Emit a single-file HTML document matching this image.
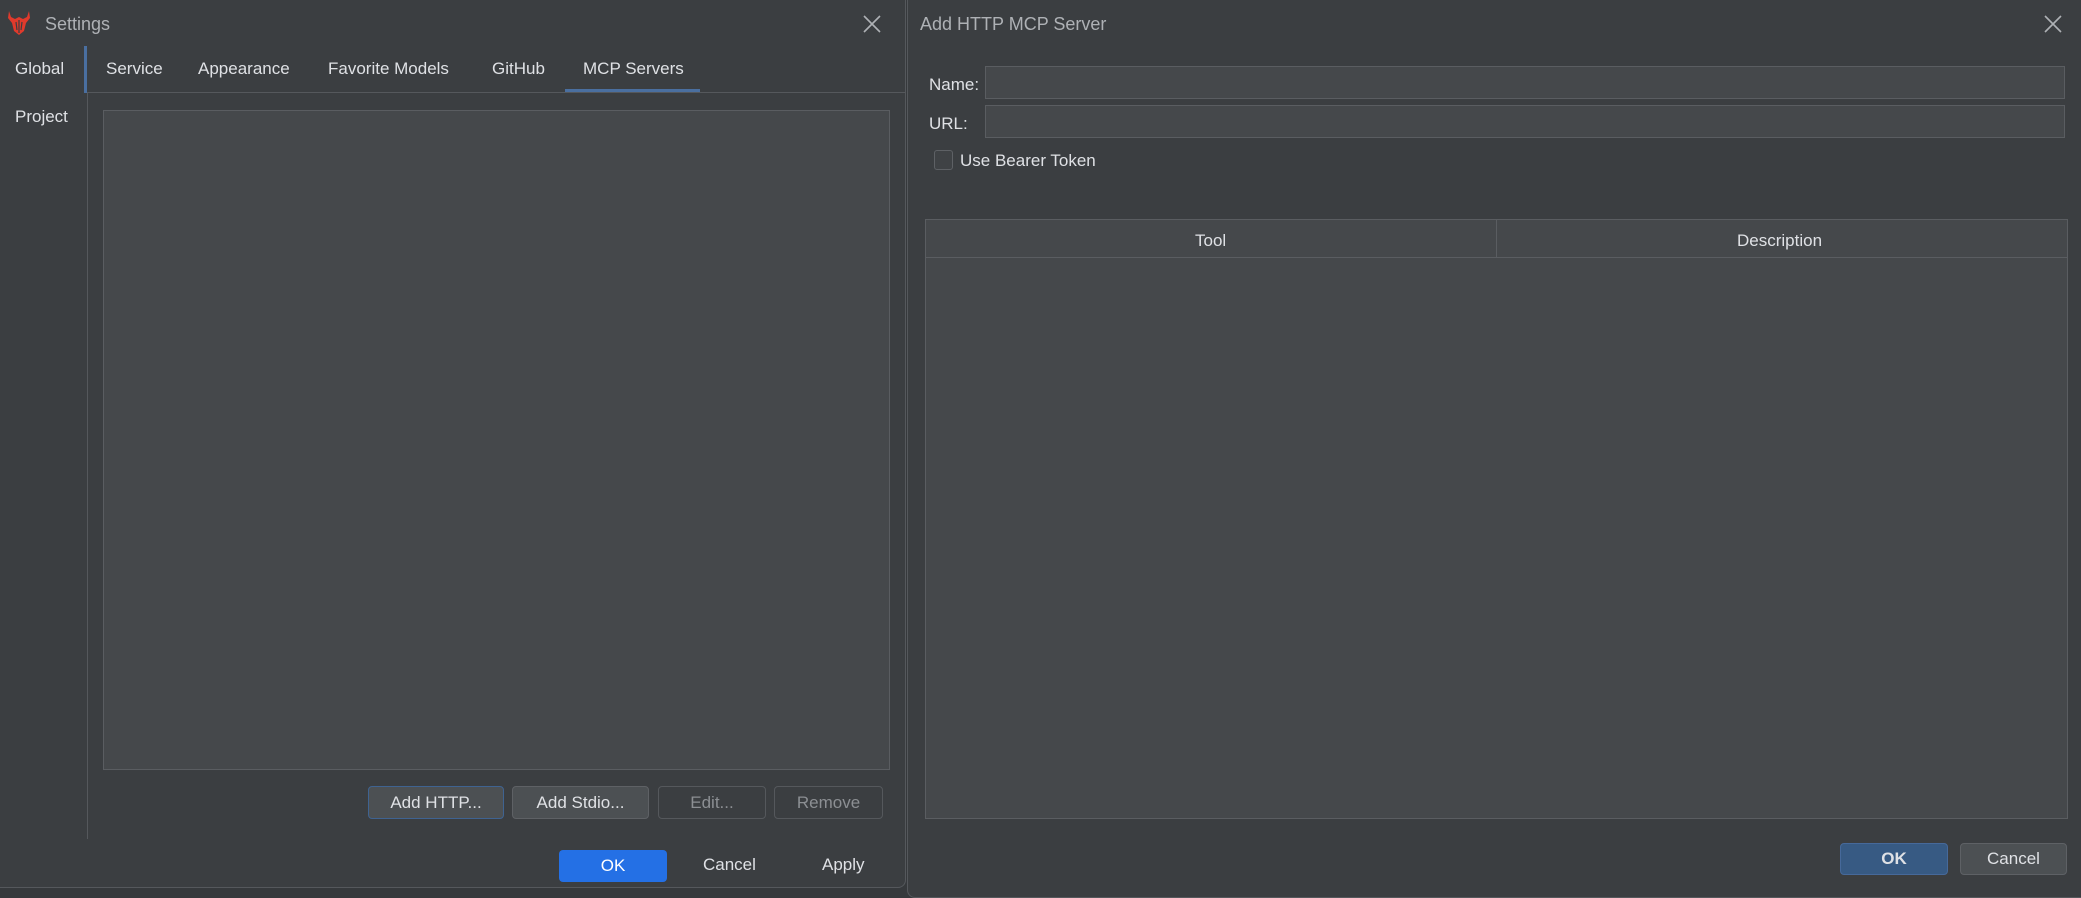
<!DOCTYPE html>
<html><head><meta charset="utf-8"><style>
*{box-sizing:border-box;margin:0;padding:0}
body{width:2081px;height:889px;background:#36393c;font-family:"Liberation Sans",sans-serif;color:#dfe1e5;position:relative;overflow:hidden;font-size:17px}
.abs{position:absolute}
.dlg{position:absolute;background:#3b3e41;border:1px solid #55585c;border-radius:8px}
.t{position:absolute;white-space:nowrap;line-height:1}
.btn{position:absolute;border-radius:4px;display:flex;align-items:center;justify-content:center;font-size:17px}
</style></head><body>
<div class="dlg" style="left:-8px;top:-8px;width:914px;height:896px"></div>
<div class="dlg" style="left:907px;top:-8px;width:1182px;height:906px;border-radius:8px"></div>

<svg class="abs" style="left:6px;top:10px" width="26" height="26" viewBox="0 0 26 26">
<path d="M3 1 L2 8 L6 13 L8 21 L13 25 L18 21 L20 13 L24 8 L23 1 L21 7 L17 9 L13 7 L9 9 L5 7 Z" fill="#e03a2c"/>
<path d="M13 10 V23 M10 12 L11 20 M16 12 L15 20" stroke="#3b3e41" stroke-width="1.2"/>
</svg>
<div class="t" style="left:45px;top:15px;color:#aeb1b5;font-size:18px">Settings</div>
<svg class="abs" style="left:863px;top:15px" width="18" height="18"><path d="M1 1L17 17M17 1L1 17" stroke="#aeb1b5" stroke-width="1.6"/></svg>

<div class="t" style="left:15px;top:60px">Global</div>
<div class="t" style="left:15px;top:108px">Project</div>
<div class="abs" style="left:84px;top:46px;width:3px;height:47px;background:#4a6fa0"></div>
<div class="abs" style="left:87px;top:93px;width:1px;height:746px;background:#55585c"></div>
<div class="abs" style="left:87px;top:92px;width:818px;height:1px;background:#55585c"></div>

<div class="t" style="left:106px;top:60px">Service</div>
<div class="t" style="left:198px;top:60px">Appearance</div>
<div class="t" style="left:328px;top:60px">Favorite Models</div>
<div class="t" style="left:492px;top:60px">GitHub</div>
<div class="t" style="left:583px;top:60px">MCP Servers</div>
<div class="abs" style="left:565px;top:89px;width:135px;height:3px;background:#4a6fa0"></div>

<div class="abs" style="left:103px;top:110px;width:787px;height:660px;background:#45484b;border:1px solid #5a5d61"></div>

<div class="btn" style="left:368px;top:786px;width:136px;height:33px;background:#4c5053;border:1px solid #3f6391">Add HTTP...</div>
<div class="btn" style="left:512px;top:786px;width:137px;height:33px;background:#4c5053;border:1px solid #5e6165">Add Stdio...</div>
<div class="btn" style="left:658px;top:786px;width:108px;height:33px;border:1px solid #55585c;color:#8c8f93">Edit...</div>
<div class="btn" style="left:774px;top:786px;width:109px;height:33px;border:1px solid #55585c;color:#8c8f93">Remove</div>

<div class="btn" style="left:559px;top:850px;width:108px;height:32px;background:#2470e5;color:#fff">OK</div>
<div class="t" style="left:703px;top:856px">Cancel</div>
<div class="t" style="left:822px;top:856px">Apply</div>

<div class="t" style="left:920px;top:15px;color:#aeb1b5;font-size:18px">Add HTTP MCP Server</div>
<svg class="abs" style="left:2044px;top:15px" width="18" height="18"><path d="M1 1L17 17M17 1L1 17" stroke="#aeb1b5" stroke-width="1.6"/></svg>

<div class="t" style="left:929px;top:76px">Name:</div>
<div class="abs" style="left:985px;top:66px;width:1080px;height:33px;background:#45484b;border:1px solid #5a5d61"></div>
<div class="t" style="left:929px;top:115px">URL:</div>
<div class="abs" style="left:985px;top:105px;width:1080px;height:33px;background:#45484b;border:1px solid #5a5d61"></div>
<div class="abs" style="left:934px;top:150px;width:19px;height:20px;border:1px solid #5e6165;border-radius:3px;background:#3f4245"></div>
<div class="t" style="left:960px;top:152px">Use Bearer Token</div>

<div class="abs" style="left:925px;top:219px;width:1143px;height:600px;background:#45484b;border:1px solid #5a5d61"></div>
<div class="abs" style="left:926px;top:257px;width:1141px;height:1px;background:#5a5d61"></div>
<div class="abs" style="left:1496px;top:220px;width:1px;height:37px;background:#5a5d61"></div>
<div class="t" style="left:1195px;top:232px">Tool</div>
<div class="t" style="left:1737px;top:232px">Description</div>

<div class="btn" style="left:1840px;top:843px;width:108px;height:32px;background:#375a83;border:1px solid #46699a;font-weight:bold">OK</div>
<div class="btn" style="left:1960px;top:843px;width:107px;height:32px;background:#4c5053;border:1px solid #5e6165">Cancel</div>
</body></html>
